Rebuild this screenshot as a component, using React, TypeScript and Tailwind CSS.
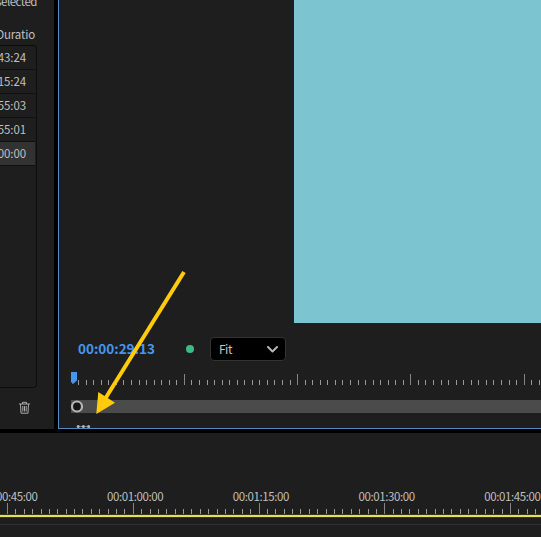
const durations = ["43:24", "15:24", "55:03", "55:01", "00:00"];

const timecodes = [
  "00:00:45:00",
  "00:01:00:00",
  "00:01:15:00",
  "00:01:30:00",
  "00:01:45:00",
];

type RulerProps = {
  start: number;
  step: number;
  count: number;
  width: number;
  minor: number;
  className?: string;
};

const Ruler = ({ start, step, count, width, minor, className = "" }: RulerProps) => {
  return (
    <svg
      width={width}
      height="11"
      shapeRendering="crispEdges"
      className={`block shrink-0 ${className}`}
    >
      {Array.from({ length: count }, (_, i) => (
        <rect
          key={i}
          x={Math.floor(start + i * step)}
          y={i % 15 === 0 ? 0 : 11 - minor}
          width="1"
          height={i % 15 === 0 ? 11 : minor}
          fill={i % 15 === 0 ? "#858585" : "#9a9a9a"}
        />
      ))}
    </svg>
  );
};

const ProjectPanel = () => {
  return (
    <div className="w-[54px] h-[429px] shrink-0 bg-[#1e1e1e] overflow-hidden flex flex-col text-[#c0c0c0] text-[11.5px]">
      <div className="w-[37px] h-[27px] flex justify-end shrink-0">
        <span className="leading-4 -mt-[7px] tracking-[-0.5px]">selected</span>
      </div>
      <div className="w-[35px] h-[18px] flex justify-end leading-[14px] tracking-[-0.15px] shrink-0">
        <span>Duratio</span>
      </div>
      <div className="w-[37px] h-[343px] border-t border-r border-b border-[#0d0d0d] rounded-r-[4px] shrink-0">
        {durations.map((time, i) => (
          <div
            key={i}
            className={`h-6 w-[35px] flex items-center justify-end pr-[9px] tracking-[-0.1px] border-b border-[#101010] ${
              i === 4 ? "bg-[#323232]" : ""
            }`}
          >
            <span>{time}</span>
          </div>
        ))}
      </div>
      <div className="flex justify-end pr-[23px] pt-[13px]">
        <svg width="13" height="13" viewBox="0 0 13 13" fill="none" stroke="#aaa">
          <path d="M1 3h11M4.500 3V1.300h4V3M2.500 3l.5 9.200h7l.5-9.200M4.800 5v5.500M6.500 5v5.500M8.200 5v5.500" />
        </svg>
      </div>
    </div>
  );
};

const ProgramMonitor = () => {
  return (
    <div className="ml-1 flex-1 h-[429px] bg-[#1e1e1e] border-l border-b border-[#5689c4] overflow-hidden flex flex-col">
      <div className="h-[323px] shrink-0 ml-[235px] bg-[#7cc5d0]" />
      <div className="flex items-center h-6 mt-[14px] pl-[19px] shrink-0">
        <span className="w-[107.5px] pb-[2px] text-[#4597f2] font-bold text-[13.5px] whitespace-nowrap">
          00:00:29:13
        </span>
        <div className="size-2 rounded-full bg-[#3dbb85]" />
        <div className="ml-[16.5px] w-[76px] h-6 bg-black border border-[#333] rounded-[4px] flex items-center justify-between pl-2 pr-[7px]">
          <span className="text-[#c4c4c4] text-[12px] tracking-[-0.5px]">Fit</span>
          <svg width="11" height="7" viewBox="0 0 11 7" fill="none" stroke="#b5b5b5" strokeWidth="2">
            <path d="M1 1l4.500 4.500L10 1" strokeLinecap="round" strokeLinejoin="round" />
          </svg>
        </div>
      </div>
      <div className="flex mt-[11px] h-[14px] items-start shrink-0">
        <svg width="6" height="13" viewBox="0 0 6 13" className="ml-3 shrink-0">
          <path d="M0 0h6v8.500l-4 3.500H0z" fill="#4597ee" />
          <path d="M0 10l2 2.500H0z" fill="#111" />
        </svg>
        <Ruler start={-5.9} step={7.55} count={64} width={464} minor={5} className="mt-[2px]" />
      </div>
      <div className="mt-[14px] h-[13px] ml-3 bg-[#4b4b4b] flex items-center shrink-0">
        <svg width="13" height="13" viewBox="0 0 13 13" className="-ml-px">
          <circle cx="7" cy="6.500" r="5" fill="#151515" stroke="#b5b5b5" strokeWidth="2.200" />
        </svg>
      </div>
      {/* marker button, clipped by the bottom of the panel */}
      <svg width="15" height="5" viewBox="0 0 15 5" className="mt-[11px] ml-[17px] shrink-0">
        <path d="M1 2.500h13" stroke="#777" />
        <circle cx="2.200" cy="2.400" r="1.500" fill="#b5b5b5" />
        <circle cx="7.400" cy="2.400" r="1.500" fill="#b5b5b5" />
        <circle cx="12.600" cy="2.400" r="1.500" fill="#b5b5b5" />
      </svg>
    </div>
  );
};

const Timeline = () => {
  return (
    <div className="mt-1 flex-1 bg-[#1e1e1e] overflow-hidden">
      <div className="flex pt-[55px] h-[70px] -ml-[53.5px] w-[640px] text-[#c0c0c0] text-[11.5px] leading-4 tracking-[-0.4px]">
        {timecodes.map((time) => (
          <span key={time} className="w-[125.75px] shrink-0 text-center">
            {time}
          </span>
        ))}
      </div>
      <Ruler start={7.55} step={8.383} count={65} width={541} minor={5} />
      <div className="h-1 border-y border-[#35331b] bg-[#e8df5c]" />
      <div className="mt-[6px] h-px bg-[#303030]" />
    </div>
  );
};

const App = () => {
  return (
    <div className="relative w-[541px] h-[537px] bg-black overflow-hidden flex flex-col font-['Noto_Sans_CJK_SC',sans-serif]">
      <div className="flex h-[429px] shrink-0">
        <ProjectPanel />
        <ProgramMonitor />
      </div>
      <Timeline />
      <svg
        width="541"
        height="537"
        className="absolute inset-0 pointer-events-none"
        fill="#ffcb0c"
      >
        <path d="M184 272L105 399" stroke="#ffcb0c" strokeWidth="4" />
        <path d="M96.300 414L98.300 392L115 402.700z" />
      </svg>
    </div>
  );
};

export default App;
